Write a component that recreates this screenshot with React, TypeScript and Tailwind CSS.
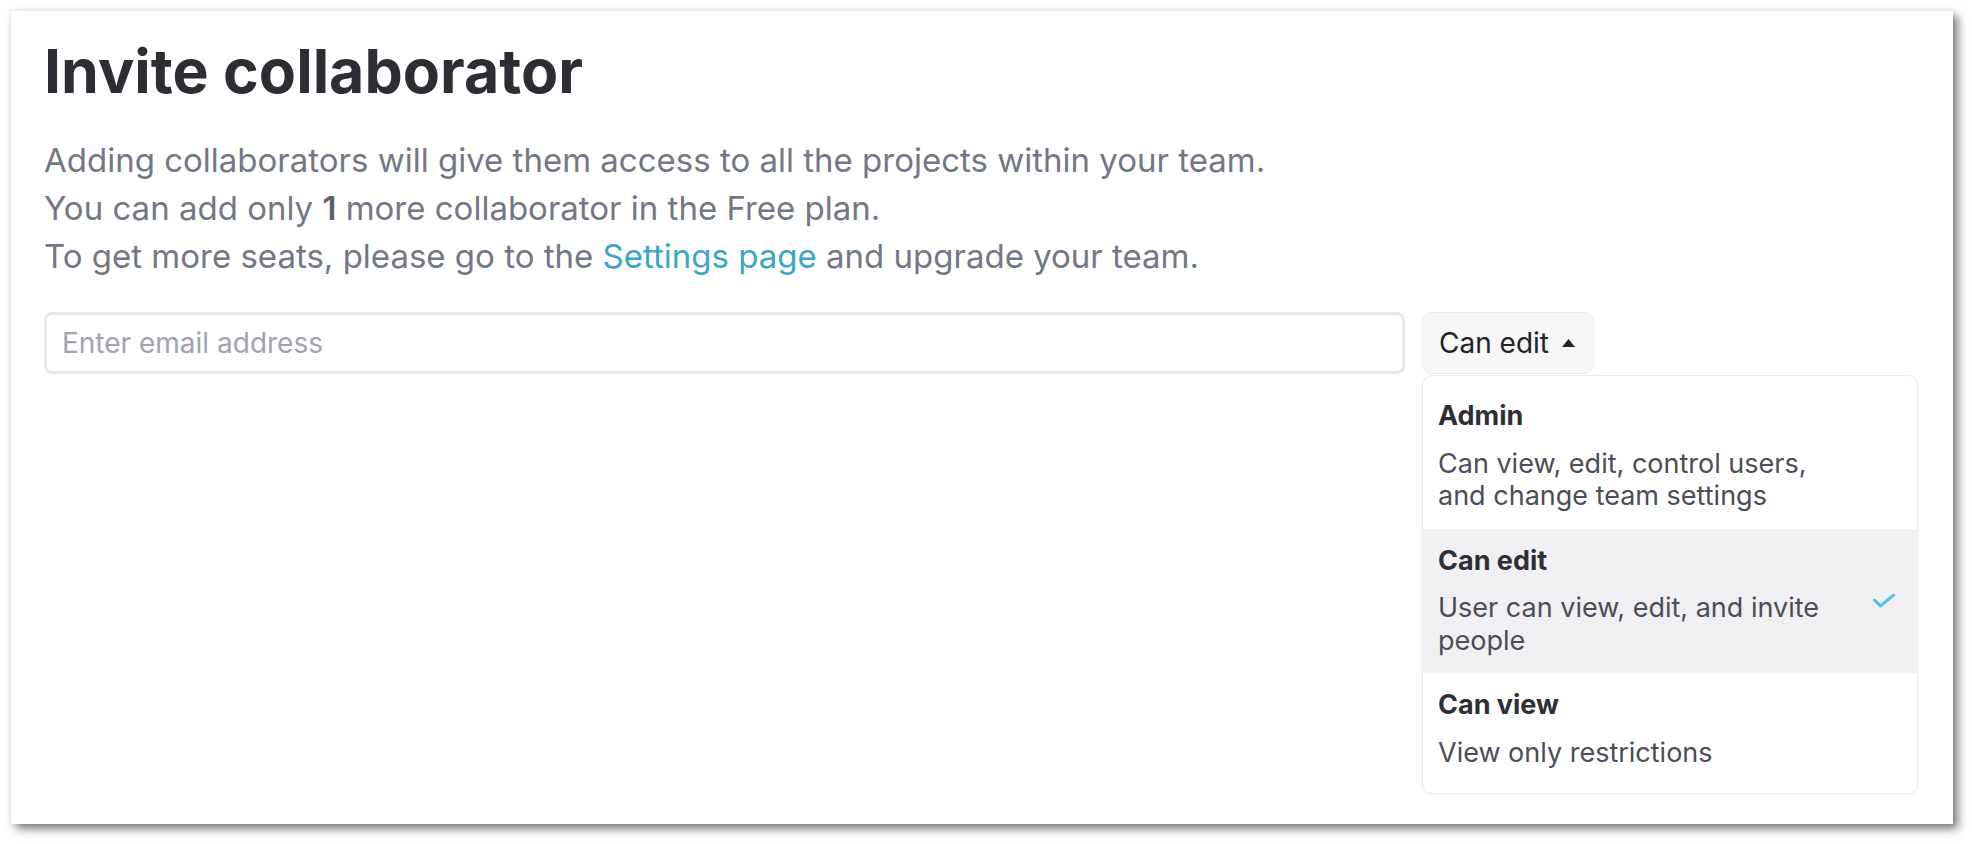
import React from "react";

function Caret() {
  return (
    <svg width="13" height="8" viewBox="0 0 13 8" className="block">
      <polygon points="6.5,0 13,8 0,8" fill="#222328" />
    </svg>
  );
}

function Check() {
  return (
    <svg width="22" height="14" viewBox="0 0 22 14" className="block">
      <polyline points="1.5,6 7.5,12 20.5,1" fill="none" stroke="#56c3e6" strokeWidth="3" strokeLinecap="round" strokeLinejoin="round" />
    </svg>
  );
}

type Opt = { title: string; desc: string; selected?: boolean };

const options: Opt[] = [
  { title: "Admin", desc: "Can view, edit, control users, and change team settings" },
  { title: "Can edit", desc: "User can view, edit, and invite people", selected: true },
  { title: "Can view", desc: "View only restrictions" },
];

export default function App() {
  return (
    <div className="w-[1972px] h-[844px] bg-white pl-[11px] pt-[11px] font-['Inter','Noto_Sans',sans-serif]">
      <div className="w-[1942px] h-[813px] bg-white shadow-[5px_5px_9px_rgba(0,0,0,0.5),0_0_5px_rgba(0,0,0,0.12)] pl-[33px] pt-[24px]">
        <h1 className="text-[60.8px] leading-[72px] font-bold text-[#2d2e33]">
          Invite collaborator
        </h1>
        <div className="mt-[29px] text-[33px] leading-[48px] text-[#737784]">
          <p>Adding collaborators will give them access to all the projects within your team.</p>
          <p>
            You can add only <span className="font-semibold text-[#5c5f6b]">1</span> more collaborator in the Free plan.
          </p>
          <p>
            To get more seats, please go to the <a className="text-[#3ba5c6]">Settings page</a> and upgrade your team.
          </p>
        </div>
        <div className="mt-[32px] flex items-start gap-[17px]">
          <input
            placeholder="Enter email address"
            className="w-[1361px] h-[62px] border-[3px] border-[#e6e7ea] rounded-[8px] px-[15px] text-[28px] text-[#222] placeholder:text-[#a0a3ad] outline-none bg-white"
          />
          <div className="relative">
            <button className="w-[172px] h-[62px] flex items-center gap-[13px] pl-[16px] bg-[#f7f7f8] border-[1.5px] border-[#ececee] rounded-[10px] text-[28px] text-[#222328]">
              <span>Can edit</span>
              <Caret />
            </button>
            <div className="absolute left-0 top-[63px] w-[496px] bg-white border border-[#ebebee] rounded-[10px] py-[8px] shadow-[0_1px_3px_rgba(0,0,0,0.05)] overflow-hidden">
              {options.map((o) => (
                <div
                  key={o.title}
                  className={`flex items-center pl-[15px] pr-[22px] py-[16px] ${o.selected ? "bg-[#f0f0f2]" : ""}`}
                >
                  <div className="flex-1">
                    <div className="text-[27px] leading-[32.5px] font-bold text-[#2e2f35]">{o.title}</div>
                    <div className="mt-[15px] max-w-[405px] text-[27px] leading-[32.5px] text-[#4b4d57]">{o.desc}</div>
                  </div>
                  {o.selected && <Check />}
                </div>
              ))}
            </div>
          </div>
        </div>
      </div>
    </div>
  );
}
